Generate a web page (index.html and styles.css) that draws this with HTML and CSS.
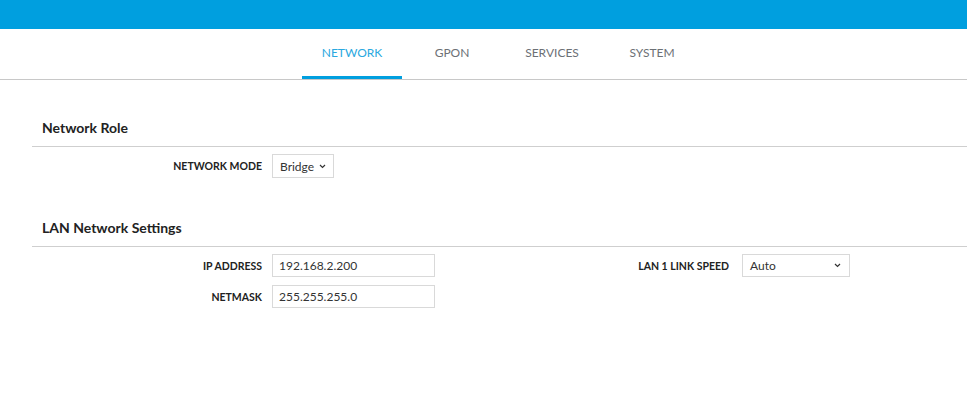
FILE: index.html
```html
<!DOCTYPE html>
<html>
<head>
<meta charset="utf-8">
<link rel="stylesheet" href="styles.css">
</head>
<body>
<header class="topbar"></header>
<nav class="tabs">
  <a class="tab active">NETWORK</a>
  <a class="tab">GPON</a>
  <a class="tab">SERVICES</a>
  <a class="tab">SYSTEM</a>
</nav>
<main class="content">
  <section class="section first">
    <h2 class="section-title">Network Role</h2>
    <div class="grid">
      <div class="field">
        <label class="label">NETWORK MODE</label>
        <div class="select select-mode"><span>Bridge</span>
          <svg class="chev" width="7" height="5" viewBox="0 0 7 5"><path d="M1 1 L3.5 3.5 L6 1" fill="none" stroke="#333" stroke-width="1.2"/></svg>
        </div>
      </div>
    </div>
  </section>
  <section class="section">
    <h2 class="section-title">LAN Network Settings</h2>
    <div class="grid two">
      <div class="col">
        <div class="field">
          <label class="label">IP ADDRESS</label>
          <input class="input" type="text" value="192.168.2.200">
        </div>
        <div class="field">
          <label class="label">NETMASK</label>
          <input class="input" type="text" value="255.255.255.0">
        </div>
      </div>
      <div class="col">
        <div class="field">
          <label class="label label-wide">LAN 1 LINK SPEED</label>
          <div class="select select-speed"><span>Auto</span>
            <svg class="chev" width="7" height="5" viewBox="0 0 7 5"><path d="M1 1 L3.5 3.5 L6 1" fill="none" stroke="#333" stroke-width="1.2"/></svg>
          </div>
        </div>
      </div>
    </div>
  </section>
</main>
</body>
</html>
```
FILE: styles.css
```css
* { box-sizing: border-box; }
html, body { margin: 0; padding: 0; background: #fff; }
body { font-family: Lato, "Open Sans", sans-serif; color: #333; }

.topbar { height: 29px; background: #009fdf; }

.tabs {
  display: flex;
  height: 51px;
  padding-left: 302px;
  border-bottom: 1px solid #c8c8c8;
}
.tab {
  width: 100px;
  display: flex;
  align-items: center;
  justify-content: center;
  padding-bottom: 1px;
  font-size: 12px;
  color: #6c7075;
  border-bottom: 3px solid transparent;
}
.tab.active { color: #2aa8e0; border-bottom-color: #009fdf; }

.content { padding-left: 32px; }
.section { margin-top: 41px; }
.section.first { margin-top: 39px; }
.section-title {
  margin: 0;
  font-size: 14px;
  line-height: 17px;
  font-weight: 700;
  color: #222;
  padding: 0 0 10px 10px;
  border-bottom: 1px solid #cfcfcf;
}
.grid { padding-top: 7px; }
.grid.two { display: flex; }
.col { width: 470px; flex-shrink: 0; display: flex; flex-direction: column; gap: 8px; }
.field { display: flex; align-items: center; }
.label {
  box-sizing: content-box;
  width: 230px;
  padding-right: 10px;
  text-align: right;
  font-size: 10.5px;
  font-weight: 700;
  color: #222;
}
.label.label-wide { width: 227px; padding-right: 13px; }
.input {
  width: 163px;
  height: 23px;
  border: 1px solid #d9d9d9;
  padding: 0 6px;
  font-family: Lato, sans-serif;
  font-size: 12px;
  color: #333;
  outline: none;
  margin: 0;
}
.select {
  height: 24px;
  border: 1px solid #d9d9d9;
  display: flex;
  align-items: center;
  justify-content: space-between;
  padding: 0 7px;
  font-size: 12px;
  color: #333;
}
.select-mode { width: 62px; }
.select-speed { width: 108px; height: 23px; padding-right: 8px; }
.chev { display: block; }
```
